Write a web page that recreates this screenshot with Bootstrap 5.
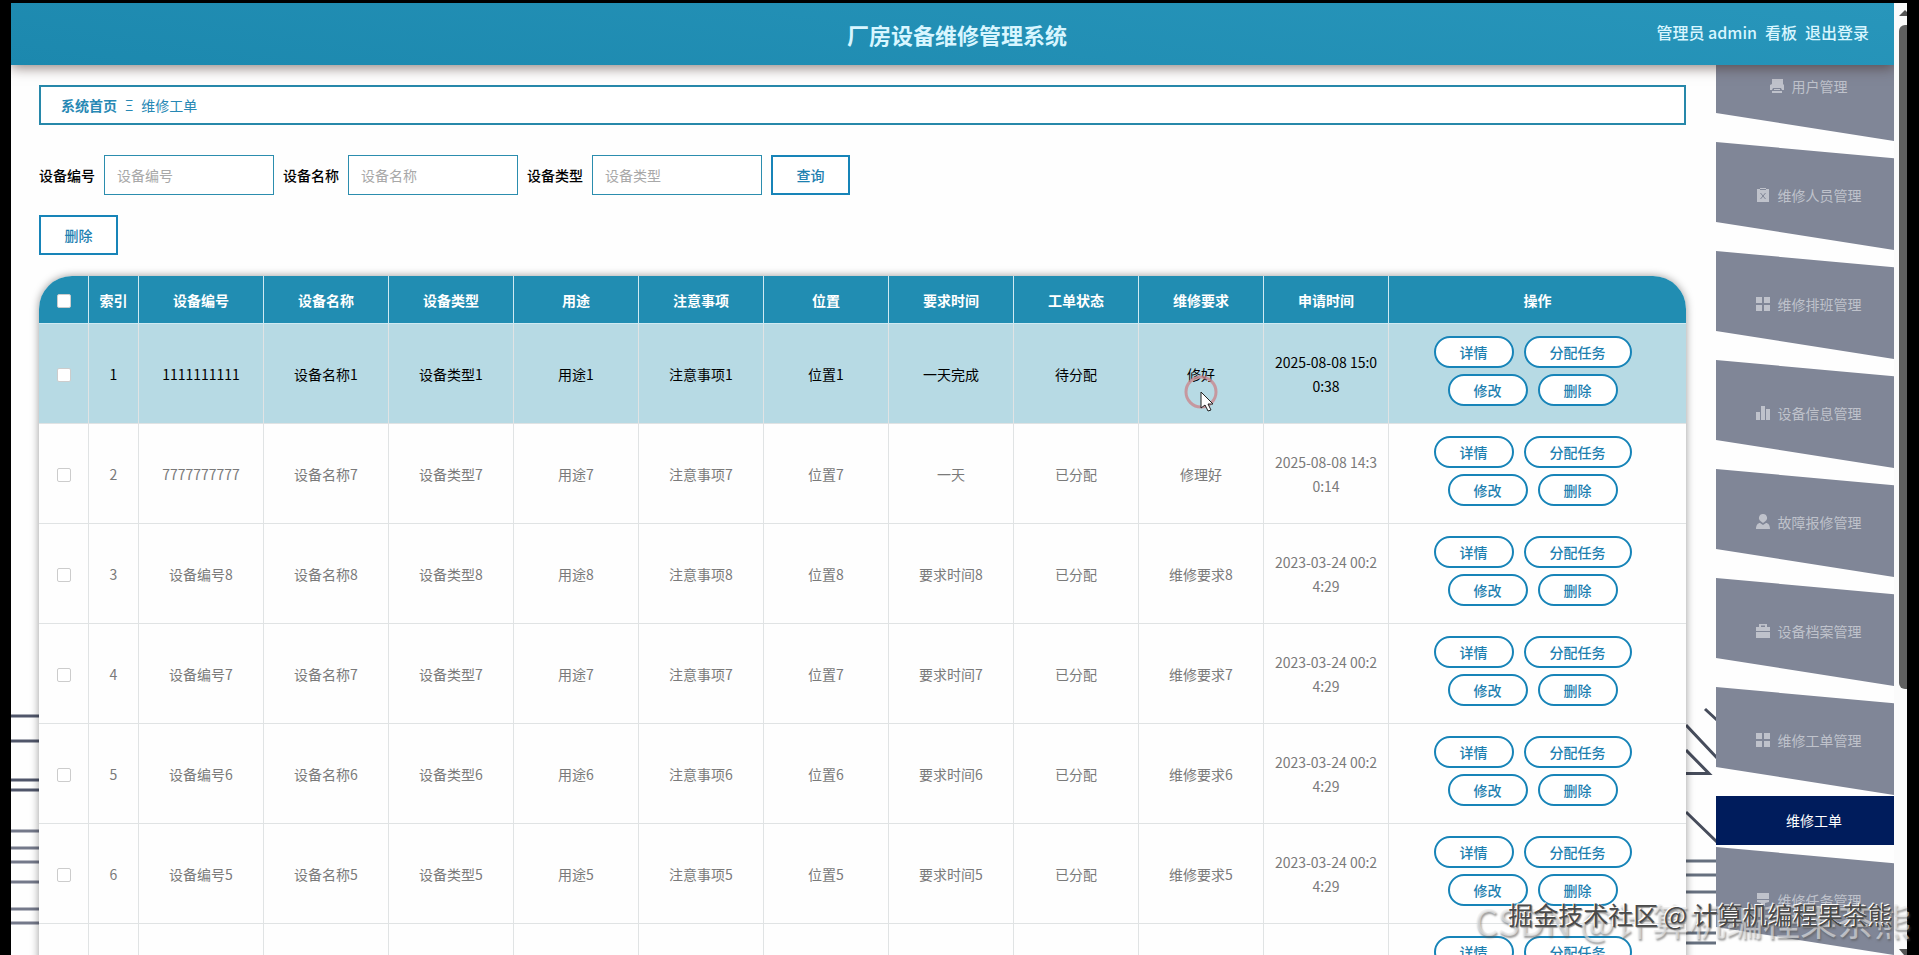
<!DOCTYPE html>
<html lang="zh-CN">
<head>
<meta charset="utf-8">
<meta name="viewport" content="width=device-width, initial-scale=1">
<title>厂房设备维修管理系统</title>
<link href="https://cdn.jsdelivr.net/npm/bootstrap@5.3.0/dist/css/bootstrap.min.css" rel="stylesheet">
<style>
  :root { --brand: #218db2; --line: #1784b8; --page-font: "Noto Sans CJK SC", "Noto Sans", sans-serif; }
  body { background: #000; font-family: var(--page-font); font-size: 14px; line-height: 24px; color: #000; padding: 3px 12px 0 11px; }
  a { text-decoration: none; }
  .screen { background: #fefefe; }
  .topbar { height: 62px; flex: none; background: linear-gradient(8deg, #1c88ae, #2896bb); box-shadow: 0 3px 12px rgba(60, 35, 30, .55); z-index: 3; color: #d8f6ff; }
  .topbar h1 { font-size: 22px; line-height: 32px; font-weight: 700; margin: 0; }
  .topbar .balance { padding-left: 34px; }
  .topbar .account { font-size: 16px; font-weight: 500; padding: 0 25px 4px 0; }
  .topbar .account a { color: inherit; }
  .content { padding: 20px 30px 0 28px; z-index: 1; }
  .crumbs { height: 40px; border: 2px solid #2788aa; padding: 0 20px; margin-bottom: 30px; background: #fff; }
  .crumbs, .crumbs a { color: #2788b4; }
  .query { gap: 9px; margin-bottom: 20px; }
  .query label { font-weight: 500; }
  .query .form-control { width: 170px; height: 40px; border: 1px solid #2b8dae; border-radius: 0; font-size: 14px; padding: 0 12px; }
  .query .form-control::placeholder { color: #a8a8a8; }
  .square-btn { width: 79px; height: 40px; border: 2px solid var(--line); border-radius: 0; background: #fff; color: #1d80b0; font-size: 14px; font-weight: 500; padding: 0 0 1px; }
  .sheet { margin-top: 21px; border-radius: 33px 33px 0 0; box-shadow: 0 0 8px rgba(0, 0, 0, .4); background: #fefefe; overflow: hidden; }
  .orders { table-layout: fixed; border-collapse: separate; border-spacing: 0; width: 100%; text-align: center; }
  .orders th, .orders td { border-right: 1px solid #e0e3e4; border-bottom: 1px solid #e0e3e4; padding: 0 10px; word-break: break-all; }
  .orders tr > :last-child { border-right: 0; }
  .orders th { height: 48px; background: var(--brand); color: #fff; font-weight: 700; padding: 0; border-color: #cfeaf2; }
  .orders td { height: 100px; color: #7a7a7a; }
  .orders .chosen td { background: #b7dae4; color: #000; }
  .narrow { width: 50px; }
  .normal { width: 125px; }
  .tick { appearance: none; display: block; margin: 3px auto 0; width: 14px; height: 14px; border: 1px solid #ccc; border-radius: 2px; background: #fff; }
  .pill { height: 32px; margin: 0 10px 6px 0; padding: 0 24px; line-height: 28px; border: 2px solid var(--line); border-radius: 16px; background: #fff; color: #1d80b0; font-size: 14px; font-weight: 500; }
  .side { width: 178px; flex: none; background: #fefefe; z-index: 1; }
  .side ul { margin-top: -32px; }
  .slab { height: 108px; margin-bottom: 1px; padding: 0 0 2px 7px; gap: 8px; background: #808697; color: #bfc2cb; clip-path: polygon(0 0, 100% 15%, 100% 100%, 0 74%); }
  .slab svg { width: 14px; height: 16px; fill: currentColor; flex: none; }
  .sub { height: 49px; margin-bottom: 2px; padding: 0 0 2px 18px; background: #001c5c; color: #fff; }
  .scroll { width: 13px; flex: none; padding-left: 5px; background: #fbfbfb; }
  .thumb { height: 664px; background: #606060; border-radius: 6px 0 0 6px; }
  .scroll svg { display: block; width: 8px; height: 22px; flex: none; }
  .blueprint { left: 0; right: 0; bottom: 0; height: 250px; }
  .stamp { right: 26px; bottom: 21px; z-index: 6; font-size: 25px; line-height: 40px; color: #4a4a4a; text-shadow: -1px -1px 0 #fff, 1px 1px 1px #888; pointer-events: none; }
  .stamp-large { right: 8px; bottom: 9px; z-index: 5; font-size: 37px; line-height: 52px; color: rgba(235, 235, 235, .6); text-shadow: 1px 2px 2px rgba(90, 90, 90, .6); pointer-events: none; }
  .pointer { left: 50%; top: 50%; width: 34px; height: 42px; transform: translate(-50%, 0); }
</style>
<script src="https://cdn.jsdelivr.net/npm/bootstrap@5.3.0/dist/js/bootstrap.bundle.min.js"></script>
</head>
<body class="vh-100 overflow-hidden position-relative">
<div class="screen d-flex h-100 overflow-hidden">
  <div class="d-flex flex-column flex-grow-1 position-relative overflow-hidden">
    <header class="topbar d-flex align-items-center position-relative">
      <div class="balance col"></div>
      <h1 class="col-auto">厂房设备维修管理系统</h1>
      <nav class="account col d-flex justify-content-end">
        <span class="me-2">管理员 admin</span>
        <a class="me-2" href="#">看板</a>
        <a href="#">退出登录</a>
      </nav>
    </header>

    <!-- Line drawing that shows beside the table -->
    <div class="blueprint position-absolute d-flex justify-content-between">
      <svg width="28" height="250" stroke="#50566a" stroke-width="3"><path d="M0 11H28M0 36H28M0 75H28M0 85H28"/><path stroke="#74798a" d="M0 126H28M0 143H28M0 157H28M0 177H28M0 204H28M0 218H28"/></svg>
      <svg width="208" height="250" fill="none" stroke="#474d5c" stroke-width="3"><path d="M19 4L32 16M0 20L32 54M0 45L23 68.500H0M0 107L32 138"/><path stroke="#66707f" d="M0 156H40M0 170H40M0 187H40M0 228H40M0 238H40"/></svg>
    </div>

    <div class="d-flex flex-grow-1 align-items-start">
      <main class="content flex-grow-1 position-relative">
        <nav class="crumbs d-flex align-items-center" aria-label="路径">
          <a class="fw-bold" href="#">系统首页</a><span class="px-2">Ξ</span><span>维修工单</span>
        </nav>
        <form class="query d-flex align-items-center">
          <label for="q-no">设备编号</label><input class="form-control" id="q-no" placeholder="设备编号">
          <label for="q-name">设备名称</label><input class="form-control" id="q-name" placeholder="设备名称">
          <label for="q-type">设备类型</label><input class="form-control" id="q-type" placeholder="设备类型">
          <button class="square-btn" type="button">查询</button>
        </form>
        <button class="square-btn d-block" type="button">删除</button>
        <div class="sheet">
          <table class="orders">
            <thead><tr>
              <th class="narrow"><input class="tick" type="checkbox" aria-label="全选"></th><th class="narrow">索引</th>
              <th class="normal">设备编号</th><th class="normal">设备名称</th><th class="normal">设备类型</th><th class="normal">用途</th>
              <th class="normal">注意事项</th><th class="normal">位置</th><th class="normal">要求时间</th><th class="normal">工单状态</th>
              <th class="normal">维修要求</th><th class="normal">申请时间</th><th>操作</th>
            </tr></thead>
            <tbody id="rows"></tbody>
          </table>
        </div>
      </main>

      <nav class="side position-relative" aria-label="功能菜单">
        <ul class="list-unstyled mb-0">
          <li><a href="#" class="slab d-flex align-items-center justify-content-center"><svg viewBox="0 0 14 16"><path d="M2 1h11v5l1 1v5h-2l-1-2H3l-1 2H0V7l2-1zM4 11h6v1H4zM2 13h10v2H2z"/></svg>用户管理</a></li>
          <li><a href="#" class="slab d-flex align-items-center justify-content-center"><svg viewBox="0 0 14 16"><path d="M1 2h3V1h6v1h3v13H1z"/><path d="M4 2.500h6M4.500 6l5 6M9.500 6l-5 6" fill="none" stroke="#808697"/></svg>维修人员管理</a></li>
          <li><a href="#" class="slab d-flex align-items-center justify-content-center"><svg viewBox="0 0 14 16"><path d="M0 1h6v6H0zM8 1h6v6H8zM0 9h6v6H0zM8 9h6v6H8z"/></svg>维修排班管理</a></li>
          <li><a href="#" class="slab d-flex align-items-center justify-content-center"><svg viewBox="0 0 14 16"><path d="M0 7h4v8H0zM5 1h4v14H5zM10 4h4v11h-4z"/></svg>设备信息管理</a></li>
          <li><a href="#" class="slab d-flex align-items-center justify-content-center"><svg viewBox="0 0 14 16"><path d="M7 0a4 4 0 0 1 2 7.500L7 9 5 7.500A4 4 0 0 1 7 0zM0 15c0-4 2-6 4-6l3 2 3-2c2 0 4 2 4 6z"/></svg>故障报修管理</a></li>
          <li><a href="#" class="slab d-flex align-items-center justify-content-center"><svg viewBox="0 0 14 16"><path fill-rule="evenodd" d="M3 4V1h8v3h3v4H0V4zm2 0h4V2.500H5zM0 9h14v6H0z"/></svg>设备档案管理</a></li>
          <li><a href="#" class="slab d-flex align-items-center justify-content-center"><svg viewBox="0 0 14 16"><path d="M0 1h6v6H0zM8 1h6v6H8zM0 9h6v6H0zM8 9h6v6H8z"/></svg>维修工单管理</a></li>
          <li><a href="#" class="sub d-flex align-items-center justify-content-center">维修工单</a></li>
          <li><a href="#" class="slab d-flex align-items-center justify-content-center"><svg viewBox="0 0 14 16"><path d="M1 1h12v6H1zM1 8h12v2l-4 1v3H5v-3l-4-1z"/></svg>维修任务管理</a></li>
        </ul>
      </nav>
    </div>
  </div>

  <div class="scroll d-flex flex-column" aria-hidden="true">
    <svg viewBox="0 0 8 22"><path d="M0 13L6 7l2 2v4z" fill="#555"/></svg>
    <div class="thumb"></div>
    <svg class="mt-auto" viewBox="0 0 8 22"><path d="M0 16h8v6H5z" fill="#555"/></svg>
  </div>
</div>

<div class="stamp-large position-absolute text-nowrap">CSDN @计算机编程果茶熊</div>
<div class="stamp position-absolute text-nowrap">掘金技术社区 @ 计算机编程果茶熊</div>

<script>
  const standard = n => [`设备编号${n}`, `设备名称${n}`, `设备类型${n}`, `用途${n}`, `注意事项${n}`, `位置${n}`, `要求时间${n}`, '已分配', `维修要求${n}`, '2023-03-24 00:24:29'];
  const orders = [
    ['1111111111', '设备名称1', '设备类型1', '用途1', '注意事项1', '位置1', '一天完成', '待分配', '修好', '2025-08-08 15:00:38'],
    ['7777777777', '设备名称7', '设备类型7', '用途7', '注意事项7', '位置7', '一天', '已分配', '修理好', '2025-08-08 14:30:14'],
    ...[8, 7, 6, 5, 4].map(standard)
  ];
  const pointer = `<svg class="pointer position-absolute" viewBox="0 0 34 42" aria-hidden="true"><circle cx="17" cy="18" r="15" fill="none" stroke="#c9878d" stroke-opacity=".8" stroke-width="3"/><path d="M17 18v16l4-3 3 6 3-1-3-6h5z" fill="#fff" stroke="#222" stroke-width="1"/></svg>`;
  document.getElementById('rows').innerHTML = orders.map((order, i) => `
    <tr class="${i ? '' : 'chosen'}">
      <td><input class="tick" type="checkbox" aria-label="选择第${i + 1}行"></td><td>${i + 1}</td>
      ${order.map((text, c) => `<td class="position-relative">${text}${!i && c === 8 ? pointer : ''}</td>`).join('')}
      <td><div class="d-flex flex-wrap justify-content-center">${['详情', '分配任务', '修改', '删除'].map(t => `<button type="button" class="pill">${t}</button>`).join('')}</div></td>
    </tr>`).join('');
</script>
</body>
</html>
